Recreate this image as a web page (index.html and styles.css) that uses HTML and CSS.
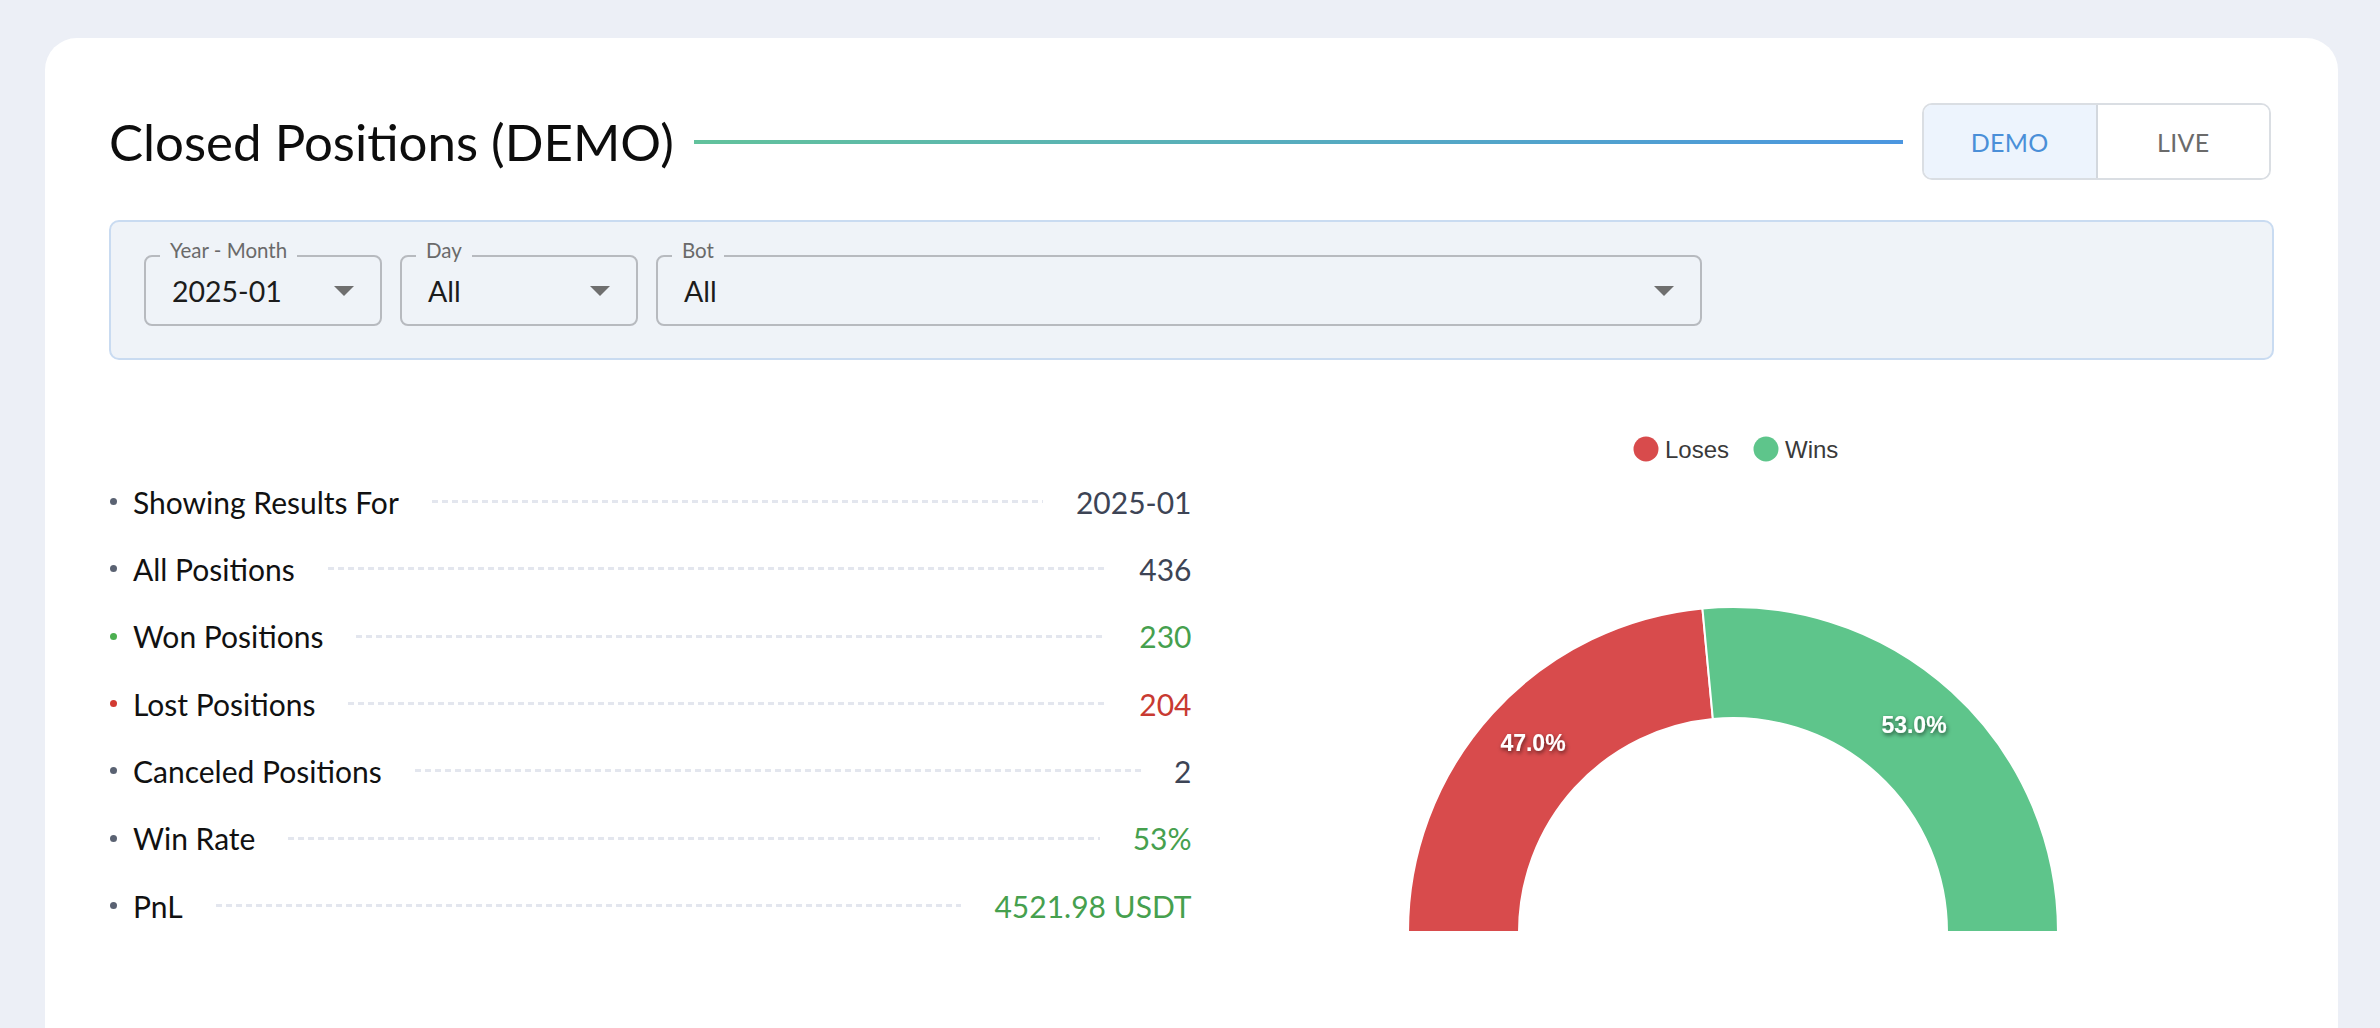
FILE: index.html
```html
<!DOCTYPE html>
<html lang="en">
<head>
<meta charset="utf-8">
<title>Closed Positions (DEMO)</title>
<link rel="stylesheet" href="styles.css">
</head>
<body>
<main class="page">
  <section class="card">
    <header class="title-row">
      <h1 class="title">Closed Positions (DEMO)</h1>
      <div class="title-line"></div>
      <div class="toggle">
        <button class="toggle-btn active">DEMO</button>
        <button class="toggle-btn">LIVE</button>
      </div>
    </header>

    <div class="filters">
      <div class="select w-small">
        <span class="select-label">Year - Month</span>
        <span class="select-value">2025-01</span>
        <svg class="select-arrow" viewBox="0 0 20 10" width="20" height="10"><polygon points="0,0 20,0 10,10"/></svg>
      </div>
      <div class="select w-small">
        <span class="select-label">Day</span>
        <span class="select-value">All</span>
        <svg class="select-arrow" viewBox="0 0 20 10" width="20" height="10"><polygon points="0,0 20,0 10,10"/></svg>
      </div>
      <div class="select w-large">
        <span class="select-label">Bot</span>
        <span class="select-value">All</span>
        <svg class="select-arrow" viewBox="0 0 20 10" width="20" height="10"><polygon points="0,0 20,0 10,10"/></svg>
      </div>
    </div>

    <div class="results">
      <ul class="stats">
        <li class="stat"><span class="dot"></span><span class="label">Showing Results For</span><span class="leader"></span><span class="value">2025-01</span></li>
        <li class="stat"><span class="dot"></span><span class="label">All Positions</span><span class="leader"></span><span class="value">436</span></li>
        <li class="stat"><span class="dot dot-green"></span><span class="label">Won Positions</span><span class="leader"></span><span class="value green">230</span></li>
        <li class="stat"><span class="dot dot-red"></span><span class="label">Lost Positions</span><span class="leader"></span><span class="value red">204</span></li>
        <li class="stat"><span class="dot"></span><span class="label">Canceled Positions</span><span class="leader"></span><span class="value">2</span></li>
        <li class="stat"><span class="dot"></span><span class="label">Win Rate</span><span class="leader"></span><span class="value green">53%</span></li>
        <li class="stat"><span class="dot"></span><span class="label">PnL</span><span class="leader"></span><span class="value green">4521.98 USDT</span></li>
      </ul>

      <div class="chart">
        <svg class="chart-svg" width="700" height="520" viewBox="0 0 700 520">
          <defs>
            <filter id="shadow" x="-30%" y="-50%" width="160%" height="200%">
              <feDropShadow dx="1" dy="2" stdDeviation="2" flood-color="#000" flood-opacity="0.6"/>
            </filter>
          </defs>
          <g class="legend">
            <circle cx="263" cy="29" r="12.5" fill="#d84b4c"/>
            <text x="282" y="29" class="legend-text">Loses</text>
            <circle cx="383" cy="29" r="12.5" fill="#5ec58b"/>
            <text x="402" y="29" class="legend-text">Wins</text>
          </g>
          <path d="M25 512 A325 325 0 0 1 319.42 188.44 L329.86 298.95 A214 214 0 0 0 136 512 Z" fill="#d84b4c" stroke="#fff" stroke-width="2" stroke-linejoin="round"/>
          <path d="M319.42 188.44 A325 325 0 0 1 675 512 L564 512 A214 214 0 0 0 329.86 298.95 Z" fill="#5ec58b" stroke="#fff" stroke-width="2" stroke-linejoin="round"/>
          <text x="150" y="323" class="slice-label" filter="url(#shadow)">47.0%</text>
          <text x="531" y="305" class="slice-label" filter="url(#shadow)">53.0%</text>
        </svg>
      </div>
    </div>
  </section>
</main>
</body>
</html>
```

FILE: styles.css
```css
* { box-sizing: border-box; }

html, body {
  margin: 0;
  padding: 0;
  background: #eceff6;
  font-family: "Lato", "Noto Sans", sans-serif;
  color: #111;
}

.page {
  padding: 38px 42px 0 45px;
  height: 1028px;
  overflow: hidden;
}

.card {
  background: #fff;
  border-radius: 32px 32px 0 0;
  padding: 65px 64px 120px 64px;
}

/* Title row */
.title-row {
  display: flex;
  align-items: center;
  height: 77px;
}

.title {
  margin: 0;
  font-size: 51px;
  font-weight: 400;
  color: #0d0d0d;
  white-space: nowrap;
}

.title-line {
  flex: 1;
  height: 4px;
  margin: 0 19px 0 20px;
  background: linear-gradient(90deg, #62c29c 0%, #4b96e0 100%);
}

.toggle {
  display: flex;
  width: 349px;
  height: 77px;
  border: 2px solid #dadee3;
  border-radius: 10px;
  overflow: hidden;
  margin-right: 3px;
}

.toggle-btn {
  flex: 1;
  border: 0;
  margin: 0;
  padding: 0;
  background: #fff;
  font-family: "Lato", "Noto Sans", sans-serif;
  font-size: 25px;
  color: #6b6b6b;
  letter-spacing: 0.3px;
}

.toggle-btn + .toggle-btn {
  border-left: 2px solid #d3d8de;
}

.toggle-btn.active {
  background: #edf4fd;
  color: #4a8fd8;
}

/* Filters */
.filters {
  margin-top: 40px;
  display: flex;
  gap: 18px;
  background: #eff3f8;
  border: 2px solid #c9dbf1;
  border-radius: 10px;
  padding: 33px 33px 32px 33px;
}

.select {
  position: relative;
  display: flex;
  align-items: center;
  justify-content: space-between;
  height: 71px;
  border: 2px solid #b7babf;
  border-radius: 8px;
  padding: 0 26px 0 26px;
}

.w-small { width: 238px; }
.w-large { width: 1046px; }

.select-label {
  position: absolute;
  top: -17px;
  left: 14px;
  padding: 0 10px;
  line-height: 20px;
  font-size: 20.5px;
  color: #6a6a6a;
  background: #eff3f8;
}

.select-value {
  font-size: 28.5px;
  color: #1c1c1c;
}

.select-arrow {
  fill: #6f6f6f;
  display: block;
}

/* Results */
.results {
  margin-top: 60px;
  display: grid;
  grid-template-columns: 1fr 1fr;
}

.stats {
  list-style: none;
  margin: 0;
  padding: 48px 0 0 0;
}

.stat {
  display: flex;
  align-items: center;
  height: 67.33px;
  font-size: 30px;
}

.dot {
  width: 7px;
  height: 7px;
  border-radius: 50%;
  background: #5a6272;
  margin-left: 1px;
  margin-right: 16px;
  flex: none;
}

.dot-green { background: #4caf50; }
.dot-red { background: #d23a32; }

.label {
  color: #111;
  white-space: nowrap;
}

.leader {
  flex: 1;
  height: 3px;
  margin: 0 33px;
  background: repeating-linear-gradient(90deg, #e3e6ee 0 6px, transparent 6px 10px);
}

.value {
  color: #3d4455;
  white-space: nowrap;
}

.value.green { color: #46a04e; }
.value.red { color: #c83a32; }

.chart {
  display: flex;
  justify-content: center;
}

.chart-svg {
  display: block;
}

.legend-text {
  font-family: "Liberation Sans", Arial, sans-serif;
  font-size: 24px;
  fill: #3a3a3a;
  dominant-baseline: central;
}

.slice-label {
  font-family: "Liberation Sans", Arial, sans-serif;
  font-size: 23px;
  font-weight: 700;
  fill: #fff;
  text-anchor: middle;
  dominant-baseline: central;
}
```
